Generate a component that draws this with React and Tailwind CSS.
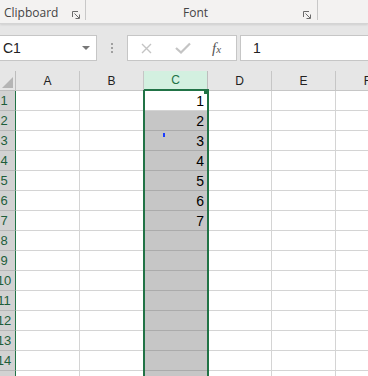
import React from "react";

const cols = ["A", "B", "C", "D", "E", "F"];
const rows = Array.from({ length: 15 }, (_, i) => i + 1);
const values = { 1: "1", 2: "2", 3: "3", 4: "4", 5: "5", 6: "6", 7: "7" };

function Launcher() {
  return (
    <svg width="8" height="8" viewBox="0 0 8 8" className="block">
      <path d="M0.5 6V0.5H6" fill="none" stroke="#6a6a6a" strokeWidth="1" />
      <path d="M2.5 2.5L7 7" stroke="#6a6a6a" strokeWidth="1" />
      <path d="M7.5 3.5V7.5H3.5" fill="none" stroke="#6a6a6a" strokeWidth="1" />
    </svg>
  );
}

export default function App() {
  return (
    <div className="w-[368px] h-[376px] overflow-hidden bg-[#e6e6e6] font-['Liberation_Sans',sans-serif] select-none">

      {/* RIBBON GROUP LABELS */}
      <div className="h-[24px] bg-[#f3f2f1] border-b border-[#d4d4d4] shadow-[0_1px_2px_rgba(0,0,0,0.1)] flex text-[#444] text-[12px] font-['Open_Sans',sans-serif]">
        <div className="w-[85px] flex items-end justify-between pl-[4px] pr-[5px] pb-[4px]">
          <span className="leading-none">Clipboard</span>
          <Launcher />
        </div>
        <div className="w-px h-[20px] bg-[#c8c8c8]" />
        <div className="w-[231px] flex items-end pb-[4px]">
          <span className="leading-none ml-[97px]">Font</span>
          <span className="ml-auto mr-[6px]"><Launcher /></span>
        </div>
        <div className="w-px h-[20px] bg-[#c8c8c8]" />
      </div>

      {/* FORMULA BAR */}
      <div className="mt-[11px] h-[26px] flex">
        <div className="w-[97px] h-full bg-white border border-l-0 border-[#c6c6c6] flex items-center pl-[3px] pr-[6px]">
          <span className="text-[14px] text-[#222] leading-none">C1</span>
          <svg width="8" height="4" viewBox="0 0 8 4" className="ml-auto">
            <path d="M0 0H8L4 4Z" fill="#777" />
          </svg>
        </div>

        <div className="w-[30px] flex flex-col items-center justify-center gap-[2px]">
          <div className="w-[2px] h-[2px] bg-[#a0a0a0]" />
          <div className="w-[2px] h-[2px] bg-[#a0a0a0]" />
          <div className="w-[2px] h-[2px] bg-[#a0a0a0]" />
        </div>

        <div className="w-[110px] h-full bg-white border border-[#c6c6c6] flex items-center">
          <svg width="11" height="11" viewBox="0 0 11 11" className="ml-[13px]">
            <path d="M1 1L10 10M10 1L1 10" stroke="#c4c4c4" strokeWidth="1.4" />
          </svg>
          <svg width="16" height="12" viewBox="0 0 16 12" className="ml-[23px]">
            <path d="M1 6L6 10.5L15 1.5" fill="none" stroke="#c4c4c4" strokeWidth="2.2" />
          </svg>
          <span className="ml-[21px] text-[15px] italic text-[#555] font-['Liberation_Serif',serif] leading-none">
            f<span className="text-[11px]">x</span>
          </span>
        </div>

        <div className="flex-1 ml-[3px] h-full bg-white border border-r-0 border-[#c6c6c6] flex items-center pl-[12px]">
          <span className="text-[14px] text-[#222] leading-none">1</span>
        </div>
      </div>

      {/* COLUMN HEADERS */}
      <div className="mt-[10px] h-[20px] flex text-[12px] text-[#222]">
        <div className="w-[16px] shrink-0 h-full border-r border-b border-[#bdbdbd] flex items-end justify-end p-[2px]">
          <svg width="11" height="11" viewBox="0 0 11 11">
            <path d="M11 0V11H0Z" fill="#b5b5b5" />
          </svg>
        </div>
        {cols.map((c) => (
          <div
            key={c}
            className={
              c === "C"
                ? "w-[64px] shrink-0 h-full bg-[#d3f0e0] text-[#217346] border-r border-[#bdbdbd] border-b-2 border-b-[#217346] flex items-center justify-center"
                : "w-[64px] shrink-0 h-full border-r border-b border-[#c6c6c6] flex items-center justify-center"
            }
          >
            {c}
          </div>
        ))}
      </div>

      {/* GRID */}
      <div className="relative">
        {rows.map((r) => (
          <div key={r} className="h-[20px] flex">
            <div className="w-[16px] shrink-0 h-full bg-[#d2d2d2] border-r border-[#217346] border-b border-b-[#b8b8b8] overflow-hidden">
              <div className="w-[26px] -ml-[9px] h-full flex items-center justify-center text-[13px] text-[#1d5e3a]">
                {r}
              </div>
            </div>
            {cols.map((c) => {
              const selected = c === "C" && r > 1;
              return (
                <div
                  key={c}
                  className={
                    selected
                      ? "relative w-[64px] shrink-0 h-full bg-[#c6c6c6] border-r border-b border-[#ababab] flex items-end justify-end pr-[3px] pb-[2px] text-[14px] text-black leading-none"
                      : "relative w-[64px] shrink-0 h-full bg-white border-r border-b border-[#d4d4d4] flex items-end justify-end pr-[3px] pb-[2px] text-[14px] text-black leading-none"
                  }
                >
                  {c === "C" ? values[r] : null}
                  {c === "C" && r === 3 && (
                    <div className="absolute left-[19px] top-[2px] w-[2px] h-[4px] bg-[#1a3cff]" />
                  )}
                </div>
              );
            })}
          </div>
        ))}

        {/* SELECTION OUTLINE */}
        <div className="absolute left-[143px] -top-px w-[66px] h-[320px] border-x-2 border-[#217346] pointer-events-none" />
        <div className="absolute left-[204px] -top-[2px] w-[5px] h-[5px] bg-[#217346]" />
      </div>
    </div>
  );
}
